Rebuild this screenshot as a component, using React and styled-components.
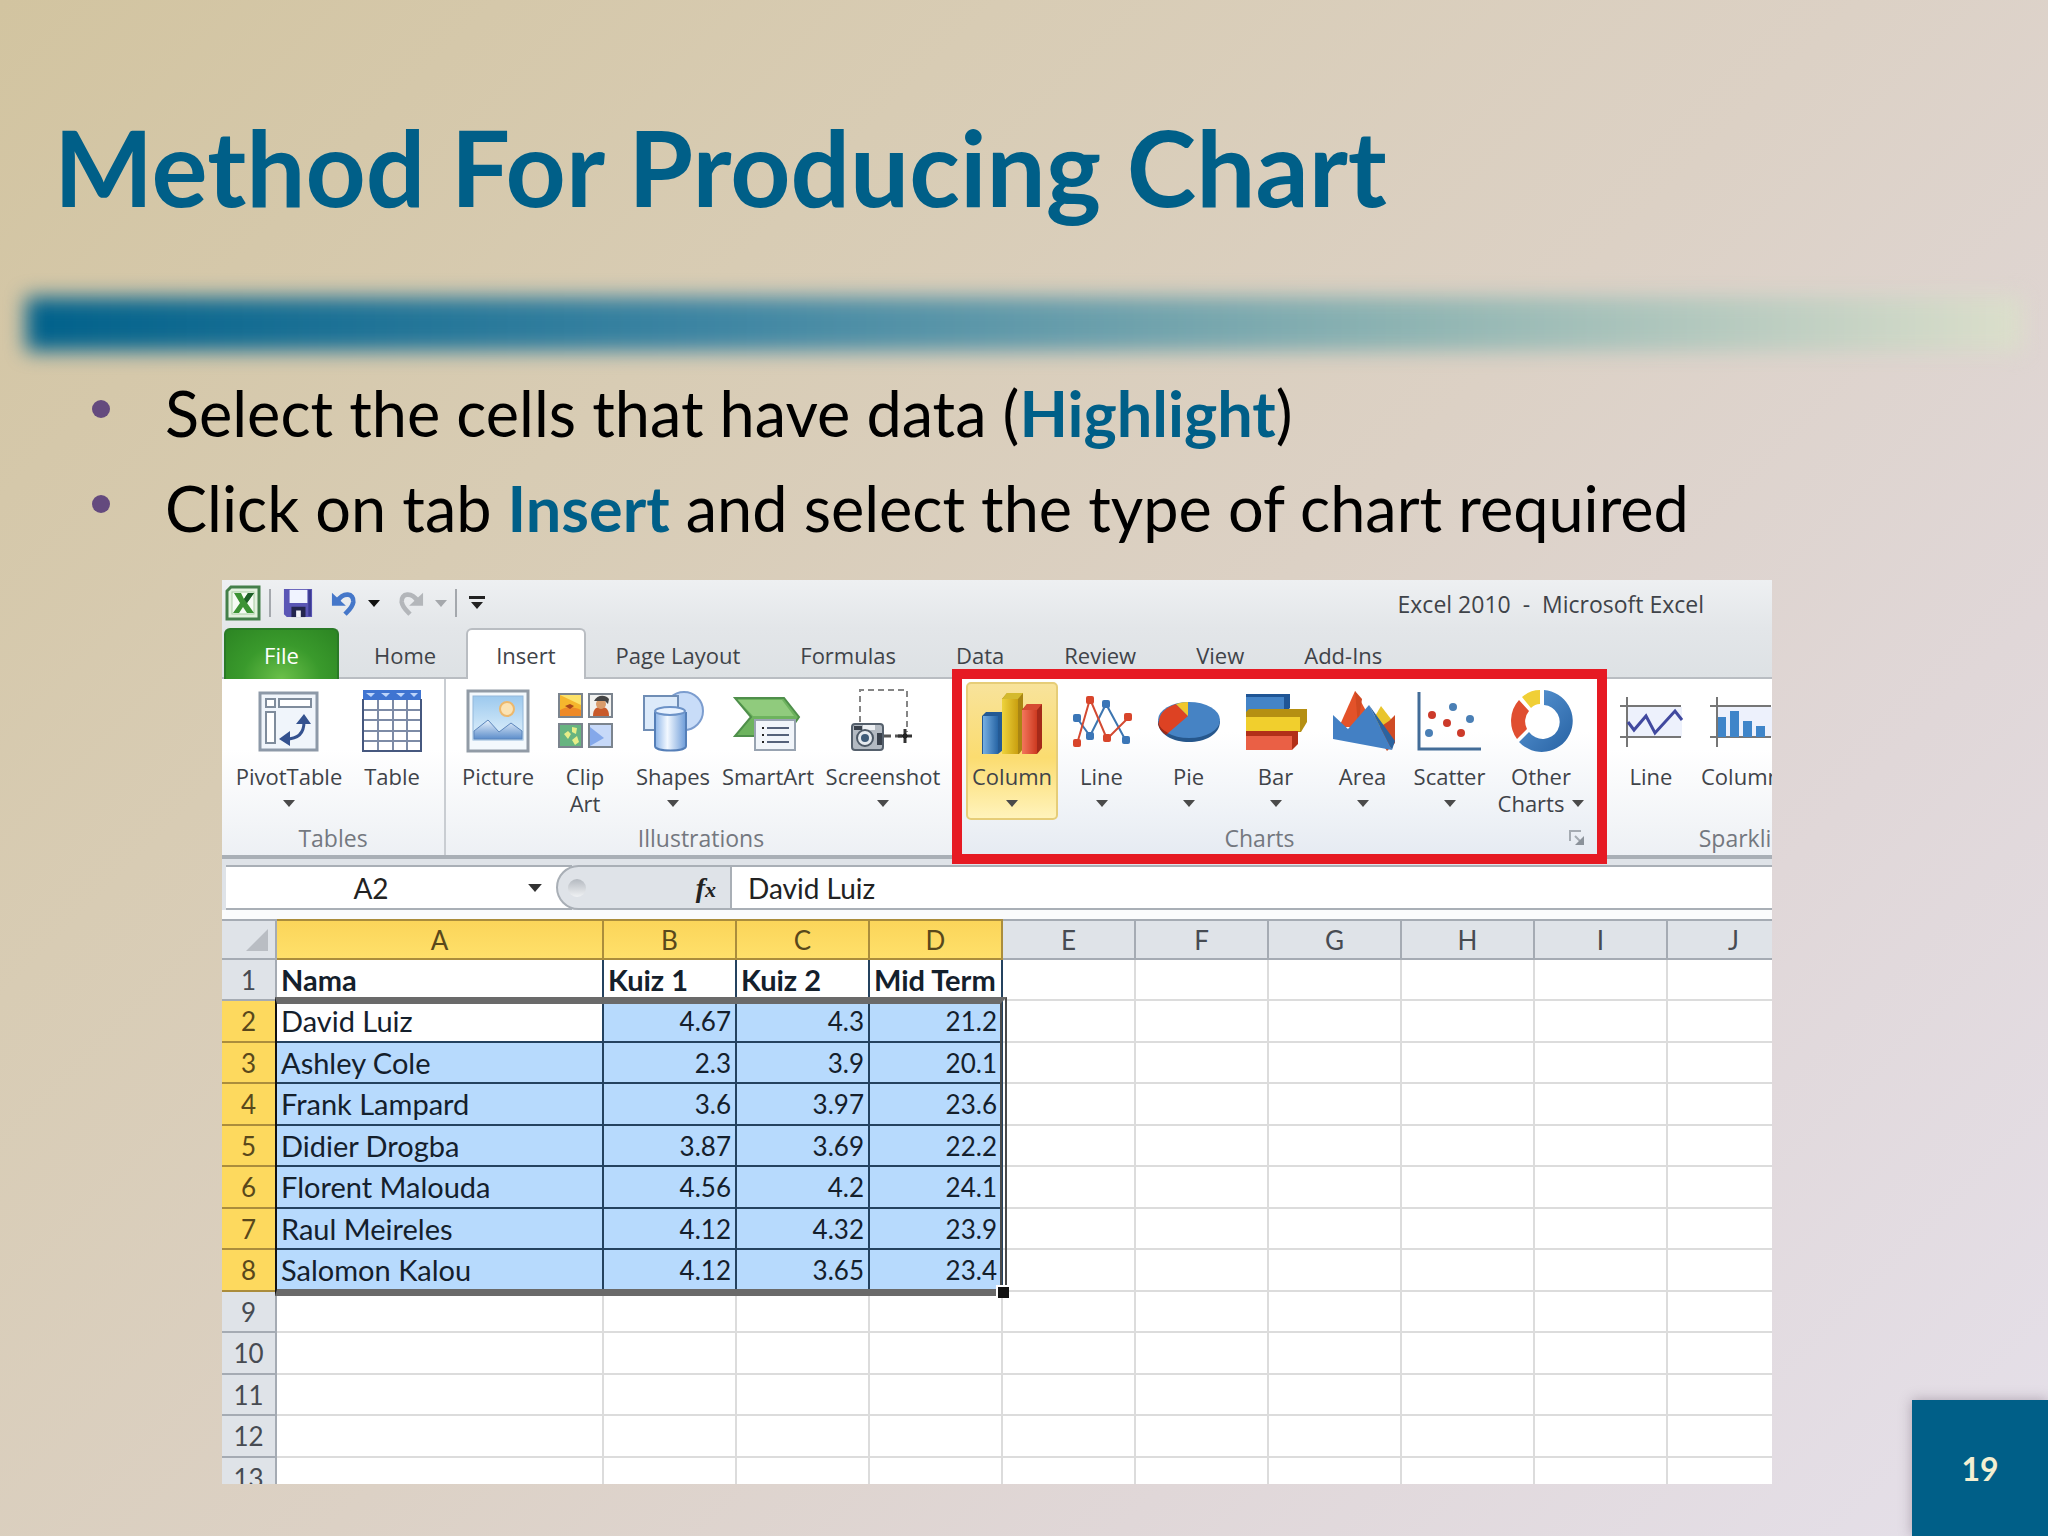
import React from "react";
import styled, { createGlobalStyle, css } from "styled-components";

/*** data ***/
const TABS = ["Home", "Insert", "Page Layout", "Formulas", "Data", "Review", "View", "Add-Ins"];

const COLUMNS = ["A", "B", "C", "D", "E", "F", "G", "H", "I", "J"];

const ROWS = [
  ["Nama", "Kuiz 1", "Kuiz 2", "Mid Term"],
  ["David Luiz", "4.67", "4.3", "21.2"],
  ["Ashley Cole", "2.3", "3.9", "20.1"],
  ["Frank Lampard", "3.6", "3.97", "23.6"],
  ["Didier Drogba", "3.87", "3.69", "22.2"],
  ["Florent Malouda", "4.56", "4.2", "24.1"],
  ["Raul Meireles", "4.12", "4.32", "23.9"],
  ["Salomon Kalou", "4.12", "3.65", "23.4"],
  [],
  [],
  [],
  [],
  []
];

/*** icons ***/
const Icon = ({ children }) => (
  <svg width="64" height="64" viewBox="0 0 64 64" aria-hidden="true">
    {children}
  </svg>
);

const PivotIcon = () => (
  <Icon>
    <rect x="3" y="4" width="57" height="57" fill="#f0f5fb" stroke="#8d99a8" strokeWidth="3" />
    <g fill="#fff" stroke="#7f8c9c" strokeWidth="2">
      <rect x="9" y="10" width="9" height="8" />
      <rect x="22" y="10" width="32" height="8" />
      <rect x="9" y="23" width="9" height="31" />
    </g>
    <path d="M29 50C41 50 47 44 47 33" fill="none" stroke="#34528f" strokeWidth="3" />
    <path d="M22 50l11-8v15z M47 25l-8 10h15z" fill="#34528f" />
  </Icon>
);

const TableIcon = () => (
  <Icon>
    <rect x="3" y="2" width="58" height="61" fill="#fff" />
    <rect x="3" y="1" width="58" height="10" fill="#3f74d1" />
    <path d="M6 4h9l-4 4zM21 4h9l-4 4zM36 4h9l-4 4zM50 4h8l-4 4z" fill="#bcd4fa" />
    <path d="M3 21h58M3 31h58M3 42h58M3 52h58M18 11v51M33 11v51M47 11v51" stroke="#7d8ba6" strokeWidth="2" />
    <path d="M3 10v52h58V10" fill="none" stroke="#46587f" strokeWidth="2" />
  </Icon>
);

const PictureIcon = () => (
  <Icon>
    <defs>
      <linearGradient id="sky" x2="0" y2="1">
        <stop stopColor="#9cc9ee" />
        <stop offset="1" stopColor="#e2f2fc" />
      </linearGradient>
      <linearGradient id="hill" x2="0" y2="1">
        <stop stopColor="#e8f2fc" />
        <stop offset="1" stopColor="#5d8ecb" />
      </linearGradient>
    </defs>
    <rect x="2" y="2" width="60" height="60" fill="#f3f9fd" stroke="#919ba6" strokeWidth="3" />
    <rect x="7" y="7" width="50" height="44" fill="url(#sky)" stroke="#94b8da" />
    <circle cx="41" cy="20" r="7" fill="#fbe3b4" stroke="#edb86c" strokeWidth="2" />
    <path d="M8 50V42L22 31 33 43 45 34 56 42V50z" fill="url(#hill)" stroke="#5d86bc" strokeWidth="1" />
  </Icon>
);

const ClipArtIcon = () => (
  <Icon>
    <g stroke="#7b848e" strokeWidth="2">
      <rect x="6" y="5" width="23" height="23" fill="#f5b62d" />
      <rect x="36" y="5" width="23" height="23" fill="#f1f1ef" />
      <rect x="6" y="35" width="23" height="23" fill="#67b480" />
      <rect x="36" y="35" width="23" height="23" fill="#c7d9f8" />
    </g>
    <path d="M7 6h21v10z" fill="#fce26a" />
    <path d="M7 21c8-4 14-3 21 0v6H7z" fill="#ee8a28" />
    <path d="M12 17l5-2 4 2-4 3z" fill="#a9461c" />
    <path d="M40 27c0-8 4-9 8-9s8 1 8 9z" fill="#c85a2b" />
    <circle cx="48" cy="15" r="5" fill="#d99c6b" />
    <path d="M41 12c3-6 11-7 15-2l-1 5-3-3h-8z" fill="#444" />
    <path d="M11 45l4-3 3 3-3 5zM19 38l5 1-1 6-4-2zM19 51l5-4 2 6-4 3z" fill="#e7ee88" />
    <path d="M37 38l14 11-14 8z" fill="#84a8ea" />
  </Icon>
);

const ShapesIcon = () => (
  <Icon>
    <defs>
      <linearGradient id="glass">
        <stop stopColor="#8db5e8" />
        <stop offset=".4" stopColor="#f2f8ff" />
        <stop offset="1" stopColor="#6c9bd8" />
      </linearGradient>
    </defs>
    <circle cx="43" cy="22" r="19" fill="#c8dcf8" stroke="#7c9dcf" strokeWidth="2" />
    <rect x="3" y="7" width="34" height="34" fill="#dceafa" stroke="#6f8db5" strokeWidth="2" />
    <path d="M14 23v34c0 6 31 6 31 0V23" fill="url(#glass)" stroke="#557fb8" strokeWidth="2" />
    <ellipse cx="29" cy="22" rx="15" ry="4" fill="#e8f2ff" stroke="#6c92c7" strokeWidth="2" />
  </Icon>
);

const SmartArtIcon = () => (
  <Icon>
    <path d="M-1 9H48L63 28 50 47H-1L15 28z" fill="#6db35e" stroke="#4f8f4b" strokeWidth="2" />
    <path d="M2 11H46L58 27H17z" fill="#90cb7d" />
    <rect x="19" y="31" width="40" height="30" fill="#f1f5fa" stroke="#98a3b1" strokeWidth="2" />
    <path d="M31 39h22M31 46h22M31 53h22" stroke="#55627a" strokeWidth="2" />
    <path d="M26 39h2M26 46h2M26 53h2" stroke="#222" strokeWidth="2" />
  </Icon>
);

const ScreenshotIcon = () => (
  <Icon>
    <path d="M9 33V1h47v42" fill="none" stroke="#858585" strokeWidth="2" strokeDasharray="6 4" />
    <path d="M33 47h20" stroke="#555" strokeWidth="3" strokeDasharray="7 4" />
    <path d="M54 40v14M47 47h14" stroke="#333" strokeWidth="3" />
    <path d="M51 47l3-3 3 3-3 3z" fill="#222" stroke="#222" />
    <rect x="1" y="35" width="31" height="26" rx="3" fill="#b3bac2" stroke="#55606c" strokeWidth="2" />
    <path d="M3 37h8v4H3zM26 44h5v12h-5z" fill="#39414c" />
    <path d="M12 36h12v5H12z" fill="#eef1f4" />
    <circle cx="14" cy="49" r="8" fill="#e5eaef" stroke="#4d5966" strokeWidth="2" />
    <circle cx="14" cy="49" r="4" fill="#3e5b78" />
  </Icon>
);

const ColumnIcon = () => (
  <Icon>
    <defs>
      <linearGradient id="blueBar"><stop stopColor="#76afe2" /><stop offset="1" stopColor="#2765a5" /></linearGradient>
      <linearGradient id="yellowBar"><stop stopColor="#eed33c" /><stop offset="1" stopColor="#c99f10" /></linearGradient>
      <linearGradient id="redBar"><stop stopColor="#f3765c" /><stop offset="1" stopColor="#cd3a20" /></linearGradient>
    </defs>
    <path d="M2 27l4-4h17v38l-5 4H2z" fill="#245a94" />
    <path d="M3 27h15v38H3z" fill="url(#blueBar)" />
    <path d="M22 10l5-6h16v56l-4 5H22z" fill="#a98513" />
    <path d="M22 10h16v55H22z" fill="url(#yellowBar)" />
    <path d="M22 10l5-6h16l-5 6z" fill="#d4ba2d" />
    <path d="M42 21l5-6h15v44l-5 6H42z" fill="#a52a19" />
    <path d="M42 21h15v44H42z" fill="url(#redBar)" />
    <path d="M42 21l5-6h15l-5 6z" fill="#d64b32" />
  </Icon>
);

const LineIcon = () => (
  <Icon>
    <g fill="none" strokeWidth="2">
      <path d="M7 29L20 47 36 15 56 52" stroke="#3c75b0" />
      <path d="M7 55L20 10 37 50 59 28" stroke="#d34a32" />
    </g>
    <g fill="#3b76b7">
      <rect x="3" y="25" width="8" height="8" rx="2" />
      <rect x="16" y="43" width="8" height="8" rx="2" />
      <rect x="32" y="11" width="8" height="8" rx="2" />
      <rect x="52" y="47" width="8" height="8" rx="2" />
    </g>
    <g fill="#d8452b">
      <rect x="3" y="50" width="8" height="8" rx="2" />
      <rect x="16" y="7" width="8" height="8" rx="2" />
      <rect x="33" y="45" width="8" height="8" rx="2" />
      <rect x="54" y="24" width="8" height="8" rx="2" />
    </g>
  </Icon>
);

const PieIcon = () => (
  <Icon>
    <path d="M1 32c0 28 62 28 62 0z" fill="#26578c" />
    <ellipse cx="32" cy="31" rx="31" ry="18" fill="#4683c4" />
    <path d="M31 27L10 45C-2 39-2 22 19 15z" fill="#dd4223" />
    <path d="M31 27L19 15q6-2 12-2z" fill="#f1c72c" />
    <path d="M1 35c1 5 4 8 8 11l2-2c-5-3-9-6-10-12z" fill="#9e2815" />
  </Icon>
);

const BarIcon = () => (
  <Icon>
    <path d="M2 5h44v14l-5 5H2z" fill="#1f5595" />
    <path d="M2 8h38v15H2z" fill="#4484c7" />
    <path d="M2 23l3-3h58v13l-6 10H2z" fill="#b58f12" />
    <path d="M2 28h54v14H2z" fill="#f1cf2d" />
    <path d="M2 42h52v13l-6 6H2z" fill="#b23019" />
    <path d="M2 47h46v14H2z" fill="#ea6045" />
  </Icon>
);

const AreaIcon = () => (
  <Icon>
    <path d="M40 34L50 17 63 34V50z" fill="#e9c52c" />
    <path d="M43 42L58 32 64 26V54L56 62z" fill="#cf4a24" />
    <path d="M8 38L24 2 44 38z" fill="#e35229" />
    <path d="M24 2l7 8-4 26z" fill="#d04922" />
    <path d="M2 26L17 40 38 16 61 61 2 50z" fill="#4380c4" />
    <path d="M38 16L64 52 61 61z" fill="#2b639f" />
  </Icon>
);

const ScatterIcon = () => (
  <Icon>
    <path d="M1 3V60H63" fill="none" stroke="#426c98" strokeWidth="3" />
    <g fill="#4a7fb5">
      <circle cx="35" cy="18" r="4" />
      <circle cx="52" cy="30" r="4" />
      <circle cx="11" cy="44" r="4" />
    </g>
    <g fill="#cc3a2a">
      <circle cx="14" cy="26" r="4" />
      <circle cx="29" cy="34" r="4" />
      <circle cx="43" cy="44" r="4" />
    </g>
  </Icon>
);

const DonutIcon = () => (
  <Icon>
    <defs>
      <linearGradient id="ring" x2="1" y2="1">
        <stop stopColor="#5b98d6" />
        <stop offset="1" stopColor="#2762a3" />
      </linearGradient>
    </defs>
    <path d="M35 1A31 31 0 1 1 10 53L20 43A17 17 0 1 0 35 16z" fill="url(#ring)" />
    <path d="M8 50A31 31 0 0 1 10 11L20 22A16 16 0 0 0 18 40z" fill="#e04e30" />
    <path d="M13 8Q21 1 31 1V15Q26 15 22 19z" fill="#f0cf36" />
  </Icon>
);

const SparkLineIcon = () => (
  <Icon>
    <path d="M9 18h54v30H9z" fill="#edf1fc" />
    <path d="M1 17h61M1 48h61M8 8v50" stroke="#767676" strokeWidth="2" />
    <path d="M9 33l6 8L27 27l9 17L56 22l7 9" fill="none" stroke="#41499f" strokeWidth="3" />
  </Icon>
);

const SparkColumnIcon = () => (
  <Icon>
    <path d="M9 18h54v30H9z" fill="#edf1fc" />
    <path d="M1 17h61M1 48h61M8 8v50" stroke="#767676" strokeWidth="2" />
    <path d="M9 28h8v20H9zM21 22h9v26h-9zM34 32h9v16h-9zM47 37h9v11h-9z" fill="#3f85c9" />
  </Icon>
);

const ExcelLogo = () => (
  <svg width="36" height="36" viewBox="0 0 36 36" aria-hidden="true">
    <path d="M6 2H34V34H2V6z" fill="#e3f1de" stroke="#44804a" strokeWidth="3" />
    <rect x="7" y="7" width="22" height="22" fill="#f6fbf4" stroke="#a9cda3" />
    <path d="M9 8h7l3 6 4-6h6l-7 10 7 10h-7l-4-6-4 6H8l7-10z" fill="#3c9334" />
    <path d="M23 8h6l-7 10-3-4z" fill="#1d5f27" />
  </svg>
);

const SaveIcon = () => (
  <svg width="30" height="30" viewBox="0 0 32 32" aria-hidden="true">
    <path d="M1 1H31V31H4L1 28z" fill="#5a56b5" />
    <path d="M7 2h19v14H7z" fill="#f0f3ff" />
    <path d="M27 2h3v28h-3z" fill="#3b3a91" />
    <path d="M9 20h15v11H9z" fill="#24264e" />
    <path d="M14 24h5v7h-5z" fill="#f3f3f8" />
  </svg>
);

const TurnIcon = ({ fill }) => (
  <svg width="26" height="26" viewBox="0 0 28 28" aria-hidden="true">
    <path d="M7 12C13 2 25 3 24 13 23 19 19 22 15 26" fill="none" stroke={fill} strokeWidth="5" />
    <path d="M1 3V17H16z" fill={fill} />
  </svg>
);

const Caret = ({ size = 12, fill = "#4a4a4a" }) => (
  <svg width={size} height={size / 2 + 1} viewBox="0 0 12 7" aria-hidden="true">
    <path d="M0 0h12L6 7z" fill={fill} />
  </svg>
);

const RIBBON = [
  {
    name: "Tables",
    items: [
      { label: "PivotTable", icon: PivotIcon, width: 118, menu: true },
      { label: "Table", icon: TableIcon, width: 88 }
    ]
  },
  {
    name: "Illustrations",
    items: [
      { label: "Picture", icon: PictureIcon, width: 88 },
      { label: "Clip", second: "Art", icon: ClipArtIcon, width: 86 },
      { label: "Shapes", icon: ShapesIcon, width: 90, menu: true },
      { label: "SmartArt", icon: SmartArtIcon, width: 100 },
      { label: "Screenshot", icon: ScreenshotIcon, width: 130, menu: true }
    ]
  },
  {
    name: "Charts",
    marked: true,
    items: [
      { label: "Column", icon: ColumnIcon, width: 92, menu: true, active: true },
      { label: "Line", icon: LineIcon, width: 87, menu: true },
      { label: "Pie", icon: PieIcon, width: 87, menu: true },
      { label: "Bar", icon: BarIcon, width: 87, menu: true },
      { label: "Area", icon: AreaIcon, width: 87, menu: true },
      { label: "Scatter", icon: ScatterIcon, width: 87, menu: true },
      { label: "Other", second: "Charts", icon: DonutIcon, width: 96, menu: true }
    ]
  },
  {
    name: "Sparklines",
    width: 304,
    items: [
      { label: "Line", icon: SparkLineIcon, width: 88 },
      { label: "Column", icon: SparkColumnIcon, width: 92 }
    ]
  }
];

const RibbonButton = ({ item }) => {
  const Picture = item.icon;
  return (
    <Tool type="button" $width={item.width} $active={item.active}>
      <Picture />
      <ToolLabel>{item.label}</ToolLabel>
      <ToolLabel>
        {item.second}
        {item.menu && <Caret size={12} />}
      </ToolLabel>
    </Tool>
  );
};

const Sheet = () => (
  <SheetArea>
    <Grid>
      <colgroup>
        <Col $width={55} />
        <Col $width={327} />
        {COLUMNS.slice(1).map(name => (
          <Col key={name} $width={133} />
        ))}
      </colgroup>
      <thead>
        <tr>
          <Corner aria-label="Select all">
            <svg width="22" height="22" viewBox="0 0 22 22" aria-hidden="true">
              <path d="M22 0V22H0z" fill="#b9bdc3" />
            </svg>
          </Corner>
          {COLUMNS.map((name, i) => (
            <ColumnHead key={name} scope="col" $on={i < 4}>
              {name}
            </ColumnHead>
          ))}
        </tr>
      </thead>
      <tbody>
        {ROWS.map((row, r) => (
          <Row key={r}>
            <RowHead scope="row" $on={r > 0 && r < 8}>
              {r + 1}
            </RowHead>
            {COLUMNS.map((name, c) => (
              <Cell
                key={name}
                $title={r === 0}
                $number={r > 0 && c > 0}
                $bordered={r < 8 && c < 4}
                $filled={r > 0 && r < 8 && c < 4 && !(r === 1 && c === 0)}
              >
                {row[c]}
              </Cell>
            ))}
          </Row>
        ))}
      </tbody>
    </Grid>
    <Selection />
  </SheetArea>
);

const App = () => (
  <Slide>
    <GlobalStyle />
    <Title>Method For Producing Chart</Title>
    <Rule />
    <Points>
      <Point>
        Select the cells that have data (<Strong>Highlight</Strong>)
      </Point>
      <Point>
        Click on tab <Strong>Insert</Strong> and select the type of chart required
      </Point>
    </Points>
    <Window>
      <TitleBar>
        <QuickAccess>
          <ExcelLogo />
          <Divider />
          <QuickButton type="button" aria-label="Save"><SaveIcon /></QuickButton>
          <QuickButton type="button" aria-label="Undo">
            <TurnIcon fill="#4577c9" />
            <Caret size={12} fill="#111" />
          </QuickButton>
          <QuickButton type="button" aria-label="Redo" $flip>
            <TurnIcon fill="#b3b6ba" />
            <Caret size={12} fill="#a5a8ac" />
          </QuickButton>
          <Divider />
          <QuickButton type="button" aria-label="Customize">
            <svg width="16" height="14" viewBox="0 0 16 14" aria-hidden="true">
              <path d="M0 0h16v3H0zM2 6h12l-6 7z" fill="#222" />
            </svg>
          </QuickButton>
        </QuickAccess>
        <WindowTitle>Excel 2010&nbsp; -&nbsp; Microsoft Excel</WindowTitle>
      </TitleBar>
      <TabRow>
        <FileTab type="button">File</FileTab>
        {TABS.map(tab => (
          <Tab key={tab} type="button" $active={tab === "Insert"}>
            {tab}
          </Tab>
        ))}
      </TabRow>
      <Ribbon>
        {RIBBON.map(group => (
          <Group key={group.name} $marked={group.marked} $width={group.width}>
            <Tools>
              {group.items.map(item => (
                <RibbonButton key={item.label} item={item} />
              ))}
            </Tools>
            <GroupFooter>
              <GroupName>{group.name}</GroupName>
              {group.marked && (
                <Launcher type="button" aria-label="Chart options">
                  <svg width="16" height="16" viewBox="0 0 16 16" aria-hidden="true">
                    <path d="M1 11V1h11M6 6l6 6" fill="none" stroke="#a5abb2" strokeWidth="2" />
                    <path d="M15 6v9H6z" fill="#8b929a" />
                  </svg>
                </Launcher>
              )}
            </GroupFooter>
          </Group>
        ))}
      </Ribbon>
      <FormulaBar>
        <NameBox aria-label="Name box" defaultValue="A2" />
        <NameMenu type="button" aria-label="Names"><Caret size={14} fill="#333" /></NameMenu>
        <FunctionArea>
          <Knob />
          <FunctionButton type="button" aria-label="Insert function">
            f<small>x</small>
          </FunctionButton>
        </FunctionArea>
        <FormulaInput aria-label="Formula" defaultValue="David Luiz" />
      </FormulaBar>
      <Sheet />
    </Window>
    <PageNumber>19</PageNumber>
  </Slide>
);

export default App;

/*** styles ***/
const GlobalStyle = createGlobalStyle`
  * {
    box-sizing: border-box;
  }
  body {
    margin: 0;
    font-family: Lato, "Liberation Sans", sans-serif;
  }
  button,
  input {
    margin: 0;
    padding: 0;
    border: none;
    background: none;
    font: inherit;
    color: inherit;
  }
  svg {
    display: block;
    flex: none;
    overflow: visible;
  }
`;

const Slide = styled.main`
  position: relative;
  display: flex;
  flex-direction: column;
  height: 100vh;
  overflow: hidden;
  background: linear-gradient(135deg, #d2c4a0 0%, #d8ccb4 28%, #dcd1c5 52%, #e0d7d8 74%, #e5e0ea 100%);
`;

const Title = styled.h1`
  margin: 0;
  padding: 106px 54px 71px;
  font-size: 105px;
  line-height: 120px;
  font-weight: 700;
  color: #005f88;
`;

const Rule = styled.div`
  height: 54px;
  margin: 0 26px 2px;
  background: linear-gradient(90deg, #00618b, #3f86a3 35%, #90b5b3 70%, #dcdfcb);
  filter: blur(10px);
`;

const Points = styled.ul`
  margin: 0;
  padding: 12px 0 0 92px;
  list-style: none;
`;

const Point = styled.li`
  display: flex;
  align-items: baseline;
  white-space: pre-wrap;
  font-size: 63px;
  line-height: 95px;
  color: #000;

  &::before {
    content: "";
    width: 18px;
    height: 18px;
    margin: 35px 55px 0 0;
    border-radius: 50%;
    background: #644a7e;
    align-self: flex-start;
  }
`;

const Strong = styled.strong`
  font-weight: 700;
  color: #005f88;
`;

const Window = styled.section`
  flex: 1;
  min-height: 0;
  margin: 25px 276px 52px 222px;
  display: flex;
  flex-direction: column;
  overflow: hidden;
  background: #fff;
  font-family: "Open Sans", "Noto Sans", sans-serif;
  font-size: 22px;
  color: #3f4349;
`;

const TitleBar = styled.header`
  display: flex;
  flex: none;
  justify-content: space-between;
  align-items: center;
  height: 48px;
  padding: 0 68px 0 3px;
  background: linear-gradient(#eef0f2, #e3e6e9);
`;

const QuickAccess = styled.div`
  display: flex;
  align-items: center;
  gap: 18px;
  padding-bottom: 2px;
`;

const QuickButton = styled.button`
  display: flex;
  align-items: center;
  gap: 11px;

  svg:first-child {
    transform: ${props => (props.$flip ? "scaleX(-1)" : "none")};
  }
`;

const Divider = styled.span`
  width: 2px;
  height: 28px;
  margin: 0 -6px 0 -10px;
  background: #a4a8ad;
`;

const WindowTitle = styled.span`
  font-size: 23px;
  white-space: nowrap;
`;

const TabRow = styled.nav`
  display: flex;
  flex: none;
  height: 51px;
  background: linear-gradient(#e3e6e9, #dde1e4);
  box-shadow: inset 0 -2px #b9bdc2;
`;

const FileTab = styled.button`
  width: 115px;
  margin: 0 5px 0 2px;
  border: 2px solid #2a7a27;
  border-bottom: none;
  border-radius: 6px 6px 0 0;
  background: radial-gradient(ellipse at 50% 100%, #6bc04a, #3a9a2c 50%, #2c8523);
  color: #fff;
`;

const Tab = styled.button`
  padding: 0 28px;
  border: 2px solid transparent;
  border-bottom: none;
  white-space: nowrap;
  ${props =>
    props.$active &&
    css`
      border-color: #b9bdc2;
      border-radius: 6px 6px 0 0;
      background: #fff;
    `}
`;

const Ribbon = styled.div`
  display: flex;
  flex: none;
  height: 180px;
  border-bottom: 4px solid #a9afb6;
  background: linear-gradient(#fff 40%, #edf0f4);
`;

const Group = styled.div`
  position: relative;
  display: flex;
  flex: none;
  flex-direction: column;
  min-width: ${props => props.$width || 0}px;
  padding: 3px 8px 0;
  border-right: 2px solid #c9cdd2;

  &:nth-child(2) {
    border-right: none;
  }

  &:last-child {
    padding-left: 0;
  }

  ${props =>
    props.$marked &&
    css`
      margin-left: -4px;
      padding: 3px 18px 0 14px;
      border-right: none;
      background: linear-gradient(#fff 30%, #e6ebf2);

      /* red frame drawn round the chart buttons */
      &::after {
        content: "";
        position: absolute;
        inset: -10px 0 -9px 0;
        border: 10px solid #e61a23;
        pointer-events: none;
      }
    `}
`;

const Tools = styled.div`
  display: flex;
`;

const Tool = styled.button`
  display: flex;
  flex: none;
  flex-direction: column;
  align-items: center;
  width: ${props => props.$width}px;
  height: 138px;
  padding-top: 5px;
  border: 2px solid transparent;
  border-radius: 5px;
  ${props =>
    props.$active &&
    css`
      border-color: #e6cd78;
      background: linear-gradient(#f8e39b, #fbdc70 55%, #fff3bb);
    `}

  svg + span {
    margin-top: 10px;
  }
`;

const ToolLabel = styled.span`
  display: flex;
  align-items: center;
  gap: 8px;
  height: 27px;
  line-height: 27px;
  white-space: nowrap;
`;

const GroupFooter = styled.div`
  display: flex;
  align-items: center;
  height: 35px;
  padding-top: 1px;
  font-size: 23px;
  color: #74787f;
`;

const GroupName = styled.span`
  flex: 1;
  text-align: center;
`;

const Launcher = styled.button`
  margin: 0 4px 0 16px;
`;

const FormulaBar = styled.div`
  display: flex;
  flex: none;
  height: 60px;
  padding: 6px 0 9px 4px;
  background: linear-gradient(#dfe3e8 51px, #fafbfc 51px);
  font-family: Lato, "Liberation Sans", sans-serif;
  font-size: 28px;
  color: #222;
`;

const NameBox = styled.input`
  width: 290px;
  border-top: 2px solid #a9afb6;
  border-bottom: 2px solid #a9afb6;
  background: #fff;
  text-align: center;
`;

const NameMenu = styled.button`
  display: flex;
  align-items: center;
  width: 56px;
  padding-left: 12px;
  border-top: 2px solid #a9afb6;
  border-bottom: 2px solid #a9afb6;
  background: #fff;
`;

const FunctionArea = styled.div`
  display: flex;
  justify-content: space-between;
  align-items: center;
  width: 176px;
  margin-left: -16px;
  padding: 0 14px 0 10px;
  border: 2px solid #a9afb6;
  border-radius: 24px 0 0 24px;
  background: #dfe3e8;
`;

const Knob = styled.span`
  width: 18px;
  height: 18px;
  border-radius: 50%;
  background: linear-gradient(#b4b9c0, #f0f2f4);
`;

const FunctionButton = styled.button`
  font-family: "Liberation Serif", serif;
  font-style: italic;
  font-weight: 700;
  font-size: 28px;

  small {
    font-size: 22px;
  }
`;

const FormulaInput = styled.input`
  flex: 1;
  min-width: 0;
  padding-left: 16px;
  border-top: 2px solid #a9afb6;
  border-bottom: 2px solid #a9afb6;
  background: #fff;
`;

const SheetArea = styled.div`
  position: relative;
  flex: 1;
  min-height: 0;
  overflow: hidden;
  font-family: Lato, "Liberation Sans", sans-serif;
  font-size: 26px;
`;

const Grid = styled.table`
  width: 1579px;
  table-layout: fixed;
  border-collapse: separate;
  border-spacing: 0;
`;

const Col = styled.col`
  width: ${props => props.$width}px;
`;

const headCell = css`
  padding: 0;
  border-right: 2px solid #a5abb3;
  border-bottom: 2px solid #a5abb3;
  background: #dfe3e8;
  font-weight: 400;
  color: #474b52;
`;

const Corner = styled.th`
  ${headCell}
  padding-left: 24px;
  border-top: 2px solid #a5abb3;
`;

const ColumnHead = styled.th`
  ${headCell}
  height: 41px;
  border-top: 2px solid #a5abb3;
  ${props =>
    props.$on &&
    css`
      border-color: #ab8d3c;
      background: linear-gradient(#fbd55a, #ffe06a);
      color: #59481b;
    `}
`;

const Row = styled.tr`
  height: 41px;

  &:nth-child(even) {
    height: 42px;
  }
`;

const RowHead = styled.th`
  ${headCell}
  ${props =>
    props.$on &&
    css`
      border-color: #ab8d3c;
      background: #fdd95e;
      color: #59481b;
    `}
`;

const Cell = styled.td`
  padding: 0 4px;
  border-right: 2px solid #dcdcdc;
  border-bottom: 2px solid #dcdcdc;
  line-height: 36px;
  white-space: nowrap;
  font-size: ${props => (props.$number ? 26 : 29)}px;
  text-align: ${props => (props.$number ? "right" : "left")};
  font-weight: ${props => (props.$title ? 700 : 400)};
  color: #14202c;
  ${props => props.$bordered && "border-color: #24425f;"}
  ${props => props.$filled && "background: #b7dafd;"}
`;

const Selection = styled.div`
  position: absolute;
  top: 78px;
  left: 53px;
  width: 732px;
  height: 299px;
  border: 7px solid #6a6a6a;
  border-right: 7px double #4a4a4a;
  border-left: 2px solid #111;
  pointer-events: none;

  &::after {
    content: "";
    position: absolute;
    right: -9px;
    bottom: -9px;
    width: 11px;
    height: 11px;
    border: solid #fff;
    border-width: 2px 0 0 2px;
    background: #111;
  }
`;

const PageNumber = styled.footer`
  position: absolute;
  right: 0;
  bottom: 0;
  display: flex;
  justify-content: center;
  align-items: center;
  width: 136px;
  height: 136px;
  background: #005f88;
  box-shadow: 0 0 12px rgba(90, 70, 90, 0.4);
  font-size: 32px;
  font-weight: 700;
  color: #f3efd2;
`;
